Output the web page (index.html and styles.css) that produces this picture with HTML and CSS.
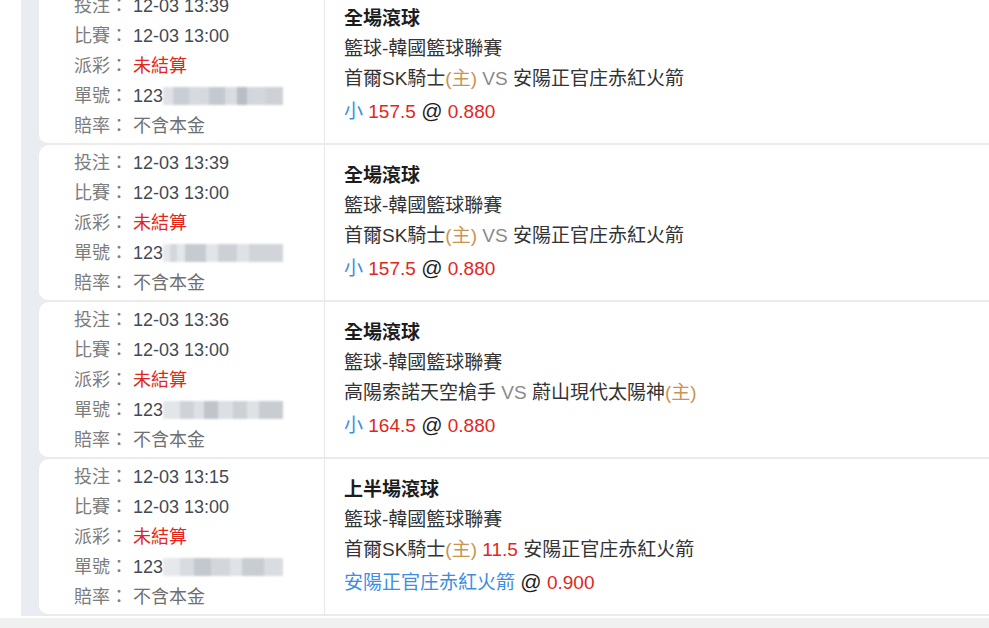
FILE: index.html
```html
<!DOCTYPE html>
<html lang="zh-Hant">
<head>
    <meta charset="UTF-8">
    <meta name="viewport" content="width=device-width, initial-scale=1.0">
    <title>注單記錄</title>
    <link rel="stylesheet" href="styles.css">
</head>
<body>
    <div class="page">
        <div class="main">
            <div class="list">
                <div class="card">
                    <div class="info">
                        <div class="row"><span class="label">投注：</span><span class="value">12-03 13:39</span></div>
                        <div class="row"><span class="label">比賽：</span><span class="value">12-03 13:00</span></div>
                        <div class="row"><span class="label">派彩：</span><span class="red">未結算</span></div>
                        <div class="row"><span class="label">單號：</span><span class="value">123</span><span class="mask mask-a"></span></div>
                        <div class="row"><span class="label">賠率：</span><span class="plain">不含本金</span></div>
                    </div>
                    <div class="bet">
                        <div class="title">全場滾球</div>
                        <div class="line">籃球-韓國籃球聯賽</div>
                        <div class="line">首爾SK騎士<span class="home">(主)</span> <span class="vs">VS</span> 安陽正官庄赤紅火箭</div>
                        <div class="line pick"><span class="blue">小</span> <span class="red">157.5</span> <span class="at">@</span> <span class="red">0.880</span></div>
                    </div>
                </div>
                <div class="card">
                    <div class="info">
                        <div class="row"><span class="label">投注：</span><span class="value">12-03 13:39</span></div>
                        <div class="row"><span class="label">比賽：</span><span class="value">12-03 13:00</span></div>
                        <div class="row"><span class="label">派彩：</span><span class="red">未結算</span></div>
                        <div class="row"><span class="label">單號：</span><span class="value">123</span><span class="mask mask-b"></span></div>
                        <div class="row"><span class="label">賠率：</span><span class="plain">不含本金</span></div>
                    </div>
                    <div class="bet">
                        <div class="title">全場滾球</div>
                        <div class="line">籃球-韓國籃球聯賽</div>
                        <div class="line">首爾SK騎士<span class="home">(主)</span> <span class="vs">VS</span> 安陽正官庄赤紅火箭</div>
                        <div class="line pick"><span class="blue">小</span> <span class="red">157.5</span> <span class="at">@</span> <span class="red">0.880</span></div>
                    </div>
                </div>
                <div class="card">
                    <div class="info">
                        <div class="row"><span class="label">投注：</span><span class="value">12-03 13:36</span></div>
                        <div class="row"><span class="label">比賽：</span><span class="value">12-03 13:00</span></div>
                        <div class="row"><span class="label">派彩：</span><span class="red">未結算</span></div>
                        <div class="row"><span class="label">單號：</span><span class="value">123</span><span class="mask mask-c"></span></div>
                        <div class="row"><span class="label">賠率：</span><span class="plain">不含本金</span></div>
                    </div>
                    <div class="bet">
                        <div class="title">全場滾球</div>
                        <div class="line">籃球-韓國籃球聯賽</div>
                        <div class="line">高陽索諾天空槍手 <span class="vs">VS</span> 蔚山現代太陽神<span class="home">(主)</span></div>
                        <div class="line pick"><span class="blue">小</span> <span class="red">164.5</span> <span class="at">@</span> <span class="red">0.880</span></div>
                    </div>
                </div>
                <div class="card">
                    <div class="info">
                        <div class="row"><span class="label">投注：</span><span class="value">12-03 13:15</span></div>
                        <div class="row"><span class="label">比賽：</span><span class="value">12-03 13:00</span></div>
                        <div class="row"><span class="label">派彩：</span><span class="red">未結算</span></div>
                        <div class="row"><span class="label">單號：</span><span class="value">123</span><span class="mask mask-d"></span></div>
                        <div class="row"><span class="label">賠率：</span><span class="plain">不含本金</span></div>
                    </div>
                    <div class="bet">
                        <div class="title">上半場滾球</div>
                        <div class="line">籃球-韓國籃球聯賽</div>
                        <div class="line">首爾SK騎士<span class="home">(主)</span> <span class="red">11.5</span> 安陽正官庄赤紅火箭</div>
                        <div class="line pick"><span class="blue">安陽正官庄赤紅火箭</span> <span class="at">@</span> <span class="red">0.900</span></div>
                    </div>
                </div>
            </div>
        </div>
        <div class="footer"></div>
    </div>
</body>
</html>
```

FILE: styles.css
```css
body {
    margin: 0;
    height: 100vh;
    overflow: hidden;
    background: #fff;
    font-family: "Liberation Sans", "Noto Sans CJK TC", sans-serif;
}
.page {
    height: 100vh;
    display: flex;
    flex-direction: column;
}
.main {
    height: 618px;
    overflow: hidden;
    padding-left: 21px;
    background: #fff;
}
.list {
    margin-top: -12px;
    padding-left: 18px;
    background: #e9ecf1;
}
.card {
    display: flex;
    height: 155px;
    background: #fff;
    border-radius: 10px 0 0 10px;
    border-bottom: 2px solid #ebebeb;
}
.info {
    width: 250px;
    padding-left: 35px;
    border-right: 1px solid #e8e8e8;
    display: flex;
    flex-direction: column;
    justify-content: center;
    font-size: 18px;
    line-height: 30px;
}
.row {
    display: flex;
    align-items: center;
    white-space: nowrap;
}
.label {
    width: 59px;
    color: #7c7c7c;
}
.value {
    color: #434a54;
}
.plain {
    color: #6f6f6f;
}
.red {
    color: #e3261c;
}
.mask {
    display: inline-block;
    width: 120px;
    height: 18px;
    filter: blur(1.2px);
    background-color: #d9dde1;
}
.mask-a {
    background-image: linear-gradient(90deg, #dfe2e6 0 8%, #c9ced4 8% 22%, #d6dadf 22% 38%, #c4c9cf 38% 52%, #d9dce0 52% 62%, #b8bec5 62% 70%, #d3d7dc 70% 86%, #cdd1d6 86% 100%);
}
.mask-b {
    background-image: linear-gradient(90deg, #e6e8eb 0 6%, #d3d7db 6% 12%, #e4e6e9 12% 18%, #c6cbd1 18% 36%, #e2e5e8 36% 46%, #cdd1d6 46% 62%, #dfe2e5 62% 72%, #d1d5da 72% 100%);
}
.mask-c {
    background-image: linear-gradient(90deg, #e3e6e9 0 14%, #cfd3d8 14% 26%, #dde0e4 26% 34%, #bfc5cb 34% 46%, #dcdfe3 46% 58%, #cdd1d6 58% 70%, #dfe2e5 70% 80%, #c8cdd2 80% 100%);
}
.mask-d {
    background-image: linear-gradient(90deg, #e6e8eb 0 14%, #d8dbdf 14% 26%, #c2c8ce 26% 40%, #d3d7db 40% 56%, #e0e3e6 56% 66%, #c8cdd2 66% 84%, #d9dce0 84% 100%);
}
.bet {
    flex: 1;
    padding-left: 19px;
    display: flex;
    flex-direction: column;
    justify-content: center;
    font-size: 19px;
    line-height: 30px;
    color: #333;
    white-space: nowrap;
}
.title {
    font-weight: bold;
    color: #1c1c1c;
}
.home {
    color: #c99450;
}
.vs {
    color: #8a8a8a;
}
.pick {
    margin-top: 2px;
    color: #1c1c1c;
}
.at {
    font-size: 21px;
}
.blue {
    color: #3d8ee2;
}
.footer {
    flex: 1;
    background: #f0f0f0;
}
```
